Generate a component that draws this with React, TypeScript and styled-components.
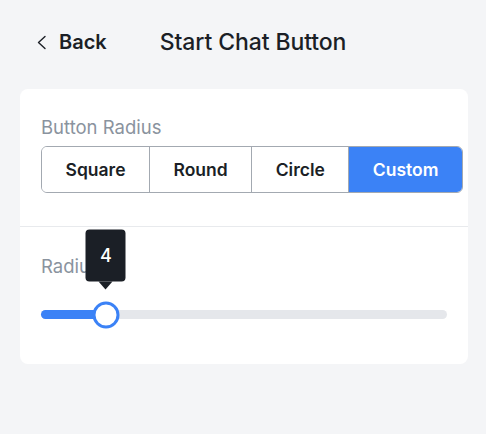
import React, { useState } from "react";
import styled, { createGlobalStyle } from "styled-components";

const GlobalStyle = createGlobalStyle`
  body {
    margin: 0;
    background: #f4f5f7;
    font-family: Inter, "Liberation Sans", sans-serif;
    color: #1b1f26;
  }
`;

const Page = styled.div`
  display: flex;
  flex-direction: column;
  padding: 0 18px 0 20px;
`;

const Header = styled.div`
  display: flex;
  align-items: center;
  height: 84px;
  margin-bottom: 5px;
  padding-left: 16px;
`;

const BackButton = styled.button`
  display: flex;
  align-items: center;
  gap: 12px;
  border: 0;
  background: none;
  padding: 0;
  font: inherit;
  font-size: 20px;
  font-weight: 600;
  color: #1b1f26;
  cursor: pointer;
`;

const Title = styled.h1`
  margin: 0 0 0 53px;
  font-size: 23px;
  font-weight: 500;
  letter-spacing: -0.1px;
`;

const Card = styled.div`
  background: #fff;
  border-radius: 8px;
`;

const Section = styled.div<{ $bottom?: boolean }>`
  display: flex;
  flex-direction: column;
  padding: 25px 6px 33px 21px;
  border-top: ${(p) => (p.$bottom ? "1px solid #e8eaed" : "0")};
`;

const SliderSection = styled(Section)`
  padding: 26px 21px 36px 21px;
`;

const Label = styled.div`
  font-size: 18.5px;
  line-height: 26px;
  color: #8a939e;
`;

const Segmented = styled.div`
  display: flex;
  align-self: flex-start;
  margin-top: 6px;
  border: 1px solid #a3a9b1;
  border-radius: 6px;
  overflow: hidden;
`;

const Segment = styled.button<{ $active?: boolean }>`
  flex: none;
  height: 45px;
  padding: 0 23.5px;
  border: 0;
  border-left: 1px solid #a3a9b1;
  font: inherit;
  font-size: 17.5px;
  font-weight: 600;
  background: ${(p) => (p.$active ? "#3b82f6" : "#fff")};
  color: ${(p) => (p.$active ? "#fff" : "#1b1f26")};
  cursor: pointer;
  &:first-child {
    border-left: 0;
  }
`;

const SliderWrap = styled.div`
  position: relative;
  height: 27px;
  margin-top: 22px;
  display: flex;
  align-items: center;
`;

const Track = styled.div`
  position: relative;
  width: 100%;
  height: 9px;
  border-radius: 5px;
  background: #e5e7eb;
`;

const Fill = styled.div`
  position: absolute;
  left: 0;
  top: 0;
  bottom: 0;
  border-radius: 5px;
  background: #3b82f6;
`;

const Thumb = styled.div`
  position: absolute;
  top: 50%;
  width: 27px;
  height: 27px;
  box-sizing: border-box;
  border: 3px solid #3b82f6;
  border-radius: 50%;
  background: #fff;
  transform: translate(-50%, -50%);
`;

const Tip = styled.div`
  position: absolute;
  bottom: 44px;
  left: 50%;
  transform: translateX(-50%);
  width: 40px;
  height: 52px;
  border-radius: 4px;
  background: #1b1f26;
  color: #fff;
  font-size: 18px;
  font-weight: 500;
  display: flex;
  align-items: center;
  justify-content: center;
  &::after {
    content: "";
    position: absolute;
    left: 50%;
    bottom: -8px;
    margin-left: -7px;
    border-left: 7px solid transparent;
    border-right: 7px solid transparent;
    border-top: 8px solid #1b1f26;
  }
`;

const options = ["Square", "Round", "Circle", "Custom"];

export default function App() {
  const [shape, setShape] = useState("Custom");
  const radius = 4;
  const max = 25;
  const pct = (radius / max) * 100;

  return (
    <Page>
      <GlobalStyle />
      <Header>
        <BackButton>
          <svg width="11" height="15" viewBox="0 0 11 15" fill="none">
            <path d="M9 1.5L2.5 7.5L9 13.5" stroke="#1b1f26" strokeWidth="1.4" strokeLinecap="round" strokeLinejoin="round" />
          </svg>
          Back
        </BackButton>
        <Title>Start Chat Button</Title>
      </Header>

      <Card>
        <Section>
          <Label>Button Radius</Label>
          <Segmented>
            {options.map((o) => (
              <Segment key={o} $active={shape === o} onClick={() => setShape(o)}>
                {o}
              </Segment>
            ))}
          </Segmented>
        </Section>

        <SliderSection $bottom>
          <Label>Radius</Label>
          <SliderWrap>
            <Track>
              <Fill style={{ width: `${pct}%` }} />
              <Thumb style={{ left: `${pct}%` }}>
                <Tip>{radius}</Tip>
              </Thumb>
            </Track>
          </SliderWrap>
        </SliderSection>
      </Card>
    </Page>
  );
}
